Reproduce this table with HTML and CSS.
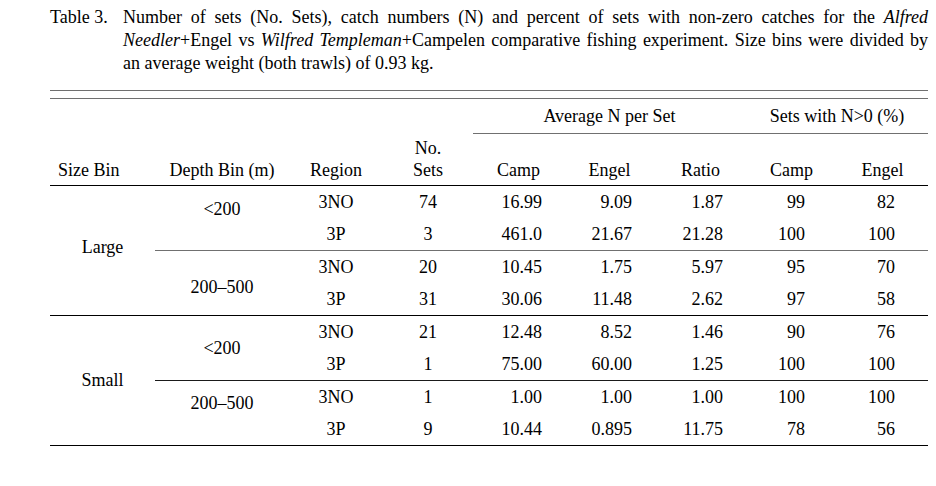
FILE: index.html
```html
<!DOCTYPE html>
<html lang="en">
<head>
<meta charset="utf-8">
<title>Table 3</title>
<link rel="stylesheet" href="styles.css">
</head>
<body>
<div class="page">
  <div class="caption">
    <div class="cap-label">Table 3.</div>
    <div class="cap-text">Number of sets (No. Sets), catch numbers (N) and percent of sets with non-zero catches for the <i>Alfred Needler</i>+Engel vs <i>Wilfred Templeman</i>+Campelen comparative fishing experiment. Size bins were divided by an average weight (both trawls) of 0.93 kg.</div>
  </div>
  <div class="double-rule"></div>
  <table class="data">
    <colgroup>
      <col class="c-size"><col class="c-depth"><col class="c-region"><col class="c-sets">
      <col class="c-num"><col class="c-num"><col class="c-num"><col class="c-num"><col class="c-num">
    </colgroup>
    <thead>
      <tr class="group-row">
        <th rowspan="2" class="h-size">Size Bin</th>
        <th rowspan="2">Depth Bin (m)</th>
        <th rowspan="2">Region</th>
        <th rowspan="2">No.<br>Sets</th>
        <th colspan="3" class="group">Average N per Set</th>
        <th colspan="2" class="group">Sets with N&gt;0 (%)</th>
      </tr>
      <tr class="col-row">
        <th>Camp</th><th>Engel</th><th>Ratio</th><th>Camp</th><th>Engel</th>
      </tr>
    </thead>
    <tbody>
      <tr class="major">
        <td rowspan="4" class="size size-large">Large</td>
        <td rowspan="2" class="depth depth-up">&lt;200</td>
        <td class="region">3NO</td><td class="sets">74</td>
        <td class="n n1">16.99</td><td class="n n2">9.09</td><td class="n n3">1.87</td><td class="n p1">99</td><td class="n p2">82</td>
      </tr>
      <tr>
        <td class="region">3P</td><td class="sets">3</td>
        <td class="n n1">461.0</td><td class="n n2">21.67</td><td class="n n3">21.28</td><td class="n p1">100</td><td class="n p2">100</td>
      </tr>
      <tr class="minor minor-gray">
        <td rowspan="2" class="depth depth-down">200–500</td>
        <td class="region">3NO</td><td class="sets">20</td>
        <td class="n n1">10.45</td><td class="n n2">1.75</td><td class="n n3">5.97</td><td class="n p1">95</td><td class="n p2">70</td>
      </tr>
      <tr>
        <td class="region">3P</td><td class="sets">31</td>
        <td class="n n1">30.06</td><td class="n n2">11.48</td><td class="n n3">2.62</td><td class="n p1">97</td><td class="n p2">58</td>
      </tr>
      <tr class="major">
        <td rowspan="4" class="size">Small</td>
        <td rowspan="2" class="depth">&lt;200</td>
        <td class="region">3NO</td><td class="sets">21</td>
        <td class="n n1">12.48</td><td class="n n2">8.52</td><td class="n n3">1.46</td><td class="n p1">90</td><td class="n p2">76</td>
      </tr>
      <tr>
        <td class="region">3P</td><td class="sets">1</td>
        <td class="n n1">75.00</td><td class="n n2">60.00</td><td class="n n3">1.25</td><td class="n p1">100</td><td class="n p2">100</td>
      </tr>
      <tr class="minor">
        <td rowspan="2" class="depth depth-up2">200–500</td>
        <td class="region">3NO</td><td class="sets">1</td>
        <td class="n n1">1.00</td><td class="n n2">1.00</td><td class="n n3">1.00</td><td class="n p1">100</td><td class="n p2">100</td>
      </tr>
      <tr>
        <td class="region">3P</td><td class="sets">9</td>
        <td class="n n1">10.44</td><td class="n n2">0.895</td><td class="n n3">11.75</td><td class="n p1">78</td><td class="n p2">56</td>
      </tr>
    </tbody>
  </table>
</div>
</body>
</html>
```
FILE: styles.css
```css
html, body {
  margin: 0;
  padding: 0;
  background: #ffffff;
}

body {
  font-family: "Liberation Serif", "Times New Roman", Tinos, "Nimbus Roman", "DejaVu Serif", serif;
  color: #000000;
}

.page {
  width: 878px;
  padding: 6px 0 0 50px;
}

.caption {
  display: flex;
  font-size: 18px;
  line-height: 23px;
}

.cap-label {
  flex: none;
  width: 73px;
}

.cap-text {
  flex: 1;
  text-align: justify;
}

.double-rule {
  margin-top: 15px;
  height: 7px;
  border-top: 1px solid #707070;
  border-bottom: 1px solid #707070;
}

.data {
  width: 878px;
  table-layout: fixed;
  border-collapse: collapse;
  font-size: 18px;
  line-height: 22px;
  font-family: inherit;
}

.c-size { width: 105px; }
.c-depth { width: 134px; }
.c-region { width: 94px; }
.c-sets { width: 90px; }
.c-num { width: 91px; }

th, td {
  padding: 0;
  font-weight: normal;
}

thead th {
  text-align: center;
  vertical-align: bottom;
  padding-bottom: 4px;
}

thead th.h-size {
  text-align: left;
  padding-left: 8px;
}

.group-row {
  height: 34px;
}

thead th.group {
  vertical-align: middle;
  padding-bottom: 0;
  border-bottom: 1px solid #707070;
}

.col-row {
  height: 52px;
}

thead {
  border-bottom: 1px solid #000000;
}

tbody {
  border-bottom: 1px solid #000000;
}

tbody td {
  height: 32px;
  vertical-align: middle;
}

td.size, td.depth, td.region, td.sets {
  text-align: center;
}

td.size-large {
  padding-bottom: 6px;
}

td.depth-up {
  padding-bottom: 18px;
}

td.depth-down {
  padding-top: 8px;
}

td.depth-up2 {
  padding-bottom: 20px;
}

td.n {
  text-align: right;
}

td.n1 { padding-right: 22px; }
td.n2 { padding-right: 23px; }
td.n3 { padding-right: 23px; }
td.p1 { padding-right: 32px; }
td.p2 { padding-right: 33px; }

tr.major td {
  border-top: 1px solid #000000;
}

tr.minor td {
  border-top: 1px solid #1a1a1a;
}

tr.minor-gray td {
  border-top: 1px solid #707070;
}
```
